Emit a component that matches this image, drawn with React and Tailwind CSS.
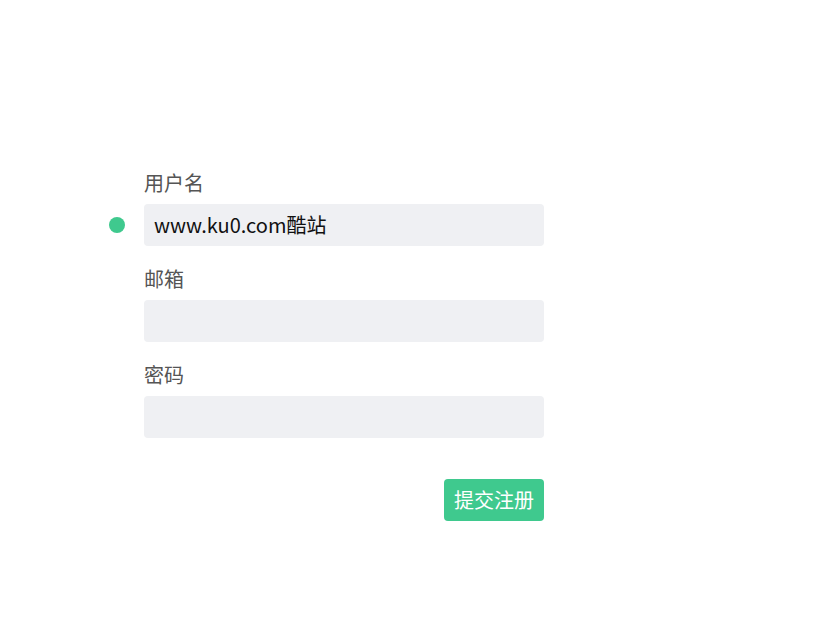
export default function App() {
  const font = { fontFamily: '"Microsoft YaHei", "Noto Sans CJK SC", "Noto Sans", sans-serif' };
  return (
    <div className="w-[838px] h-[633px] bg-white" style={font}>
      <div className="pt-[171px] pl-[144px] w-[544px] box-content">
        <div className="flex flex-col">
          <label className="text-[20px] leading-[24px] text-[#555]">用户名</label>
          <div className="relative mt-[9px]">
            <span className="absolute left-[-35px] top-[13px] w-[16px] h-[16px] rounded-full bg-[#3fc98e]"></span>
            <div className="h-[42px] w-[400px] rounded-[4px] bg-[#eff0f3] flex items-center pl-[10px] text-[20px] text-[#111]">
              www.ku0.com酷站
            </div>
          </div>
          <label className="mt-[21px] text-[20px] leading-[24px] text-[#555]">邮箱</label>
          <div className="mt-[9px] h-[42px] w-[400px] rounded-[4px] bg-[#eff0f3]"></div>
          <label className="mt-[21px] text-[20px] leading-[24px] text-[#555]">密码</label>
          <div className="mt-[9px] h-[42px] w-[400px] rounded-[4px] bg-[#eff0f3]"></div>
          <div className="mt-[41px] w-[400px] flex justify-end">
            <button className="h-[42px] w-[100px] rounded-[4px] bg-[#3fc98e] text-white text-[20px] flex items-center justify-center">
              提交注册
            </button>
          </div>
        </div>
      </div>
    </div>
  );
}
